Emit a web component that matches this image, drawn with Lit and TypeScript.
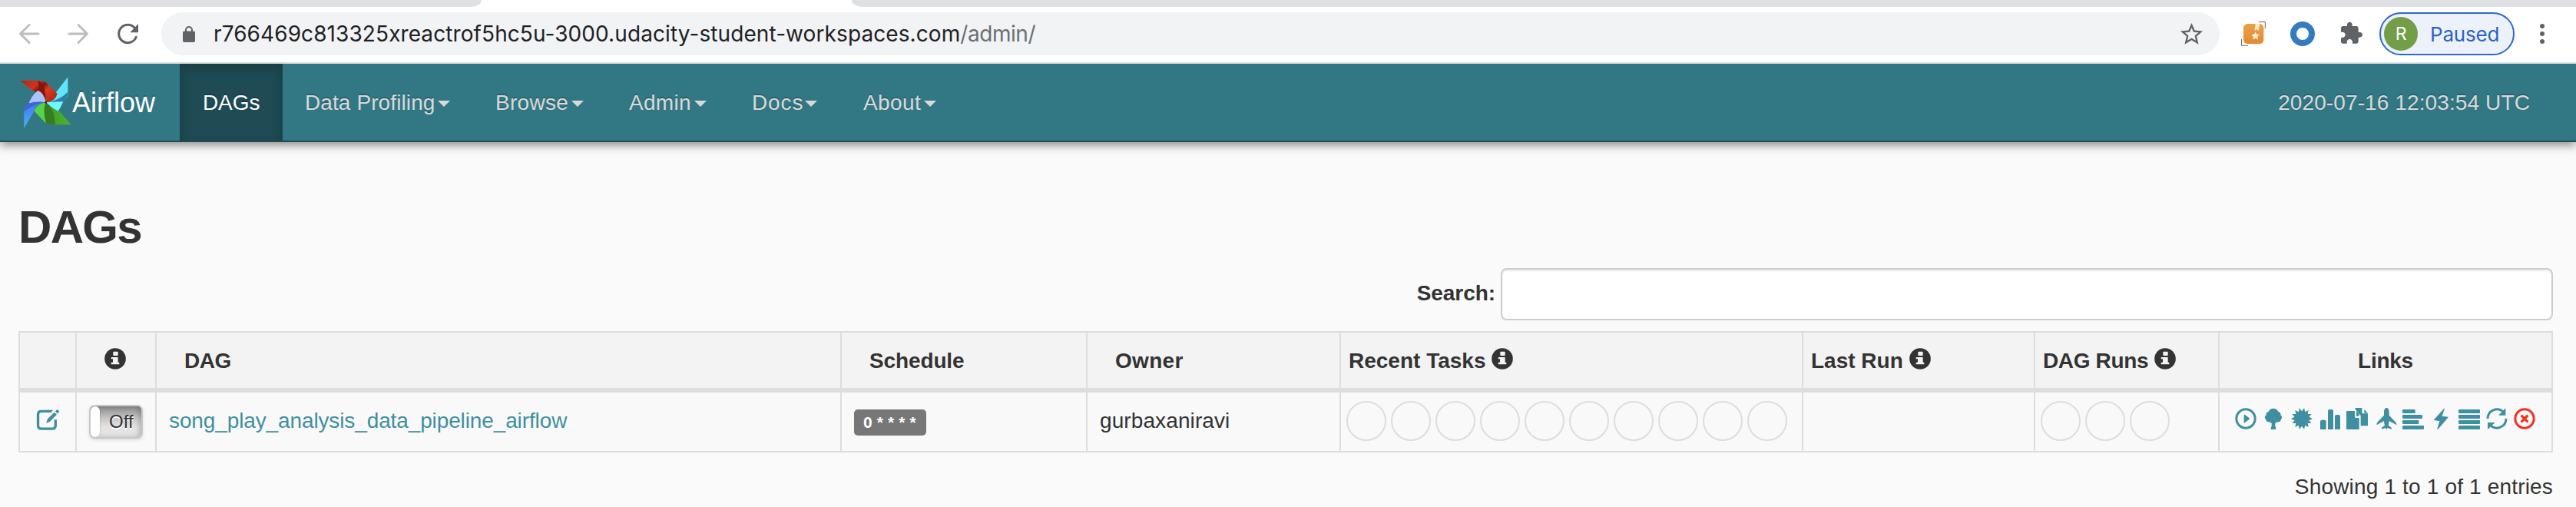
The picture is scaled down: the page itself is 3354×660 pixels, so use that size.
import { LitElement, html, svg, css, TemplateResult } from "lit";
import { customElement } from "lit/decorators.js";

/* Points of a star-shaped burst centred on (cx, cy). */
const burst = (n: number, cx: number, cy: number, outer: number, inner: number, start = 0): string =>
  Array.from({ length: n * 2 }, (_, i) => {
    const r = i % 2 ? inner : outer;
    const a = start + (Math.PI * i) / n;
    return `${(cx + r * Math.cos(a)).toFixed(1)},${(cy + r * Math.sin(a)).toFixed(1)}`;
  }).join(" ");

const infoIcon = html`<svg class="info" viewBox="0 0 84 84">
  <circle cx="42" cy="42" r="41.5" fill="#333" />
  <path fill="#f3f3f3" d="M36 14h15q2 0 2 2v12q0 2-2 2H36q-2 0-2-2V16q0-2 2-2zM28 36h23q2 0 2 2v18h3q2 0 2 2v4q0 2-2 2H28q-2 0-2-2v-4q0-2 2-2h5V43h-5q-2 0-2-2v-3q0-2 2-2z" />
</svg>`;

/* Action icons of a row, each on an 84-unit square. */
const links: { title: string; shape: TemplateResult }[] = [
  { title: "Trigger Dag", shape: svg`<circle cx="42" cy="42" r="36.5" fill="none" stroke="currentColor" stroke-width="9"/><path d="M35 27q0-3 3-1l18 14q3 2 0 4L38 58q-3 2-3-1z"/>` },
  { title: "Tree View", shape: svg`<path d="M42 2c9 0 17 5 19 13 8 1 10 6 9 12 6 5 7 13 2 18-2 9-9 12-17 10-2 3-4 4-6 4v12l3 8q1 5-2 5H34q-3 0-2-5l3-8V59c-3 0-5-1-6-4-8 2-15-2-17-10-5-6-4-13 2-18-1-7 2-11 9-12 2-8 10-13 19-13z"/>` },
  { title: "Graph View", shape: svg`<polygon points=${burst(14, 42, 42, 42, 29)}/>` },
  { title: "Tasks Duration", shape: svg`<path d="M6 84V53q0-6 6-6h11q6 0 6 6v31zM36 84V12q0-6 6-6h9q6 0 6 6v72zM63 84V33q0-6 6-6h9q6 0 6 6v51z"/>` },
  { title: "Task Tries", shape: svg`<path d="M2 12h31v22q0 5 5 5h12v43q0 2-2 2H2q-2 0-2-2V14q0-2 2-2zM39 12l11 11-.5 9H39zM35 0h26v18q0 4 4 4h19v46q0 2-2 2H56V29L35 6zM70 6l14 14H70z"/>` },
  { title: "Landing Times", shape: svg`<path d="M46 0c7 0 10 8 10 17v12l26 27q3 3 3 11L56 51q0 9-3 17l11 8q2 2 1 7L50 78l-4 6-4-6-15 5q-1-5 1-7l11-8q-3-8-3-17L7 67q0-8 3-11l26-27V17C36 8 39 0 46 0z"/>` },
  { title: "Gantt View", shape: svg`<rect y="6" width="50" height="15" rx="3"/><rect y="27" width="78" height="15" rx="3"/><rect y="48" width="64" height="15" rx="3"/><rect y="69" width="84" height="15" rx="3"/>` },
  { title: "Code View", shape: svg`<path d="M57 2 47 32l23 3q2 1 0 3L31 83q-3 3-3-1l9-30-22-4q-1-1 1-3L55 2q2-2 2 0z"/>` },
  { title: "Logs", shape: svg`<rect y="6" width="84" height="15" rx="3"/><rect y="27" width="84" height="15" rx="3"/><rect y="48" width="84" height="15" rx="3"/><rect y="69" width="84" height="15" rx="3"/>` },
  { title: "Refresh", shape: svg`<g fill="none" stroke="currentColor" stroke-width="9"><path d="M6 42A36 36 0 0 1 68 17"/><path d="M78 42A36 36 0 0 1 16 67"/></g><path d="M76 1v28H48zM6 84V57h29z"/>` },
  { title: "Delete Dag", shape: svg`<circle cx="42" cy="42" r="36.5" fill="none" stroke="currentColor" stroke-width="9"/><path fill="none" stroke="currentColor" stroke-width="10" d="m29 29 26 26M55 29 29 55"/>` },
];

const menus = [
  { label: "Data Profiling", cls: "m-data" },
  { label: "Browse", cls: "m-browse" },
  { label: "Admin", cls: "m-admin" },
  { label: "Docs", cls: "m-docs" },
  { label: "About", cls: "m-about" },
];

@customElement("app-root")
export class AppRoot extends LitElement {
  static styles = css`
    :host { display: block; height: 660px; overflow: hidden; background: #fafafa; color: #333;
      font: 28px/40px "Liberation Sans", Arial, sans-serif; }
    * { box-sizing: border-box; }
    svg { display: block; flex: none; overflow: visible; }

    .tabs { display: flex; justify-content: space-between; height: 9px; background: #fff; }
    .tabs div { background: #dee0e4; }
    .tab-l { width: 627px; border-radius: 0 0 14px 0 / 0 0 9px 0; }
    .tab-r { width: 2245px; border-radius: 0 0 0 14px / 0 0 0 9px; }
    .toolbar { display: flex; align-items: center; height: 74px; padding: 0 0 2px 24px; background: #fff;
      border-bottom: 2px solid #dadce0; color: #5f6368; }
    .back { margin-right: 36px; }
    .fwd { margin-right: 36px; }
    .reload { margin-right: 29px; }
    .url { flex: none; display: flex; align-items: center; width: 2680px; height: 56px; padding: 0 19px 0 28px;
      border-radius: 28px; background: #f1f3f4; font-family: Inter, sans-serif; white-space: pre; color: #202124; }
    .lock { margin-right: 24px; }
    .domain { letter-spacing: 0.09px; }
    .path { letter-spacing: -0.45px; color: #6b6f73; }
    .star { margin-left: auto; }
    .ext { margin-left: 28px; }
    .ring { width: 32px; height: 32px; margin-left: 32px; border: 8px solid #347cbe; border-radius: 50%; }
    .puzzle { margin-left: 34px; }
    .profile { display: flex; align-items: center; width: 176px; height: 56px; margin-left: 18px; padding-left: 4px;
      border: 2px solid #2f67cd; border-radius: 28px; background: #edf2fa; color: #2b62c9;
      font: 26px/40px Inter, sans-serif; letter-spacing: -0.2px; }
    .profile span + span { padding-top: 2px; }
    .avatar { width: 44px; height: 44px; margin-right: 16px; border-radius: 50%; background: #739e48; color: #fff;
      font-size: 23px; line-height: 45px; text-align: center; }
    .dots { display: grid; gap: 4px; margin-left: 33px; }
    .dots i { width: 6px; height: 6px; border-radius: 50%; background: #5f6368; }

    nav { display: flex; height: 102px; border-bottom: 2px solid #1f4b55; background: #327884; color: #d9d9d9;
      line-height: 102px; text-shadow: 0 -2px 0 rgba(0, 0, 0, 0.2); box-shadow: 0 4px 12px rgba(0, 0, 0, 0.45);
      clip-path: inset(0 0 -30px 0); white-space: nowrap; }
    .brand { display: flex; width: 234px; padding-left: 26px; color: #fff; font-size: 36px; }
    .logo { margin: 17px 1px 0 0; }
    .active { width: 134px; padding-left: 30px; background: #1e4b54; color: #fff;
      box-shadow: inset 0 6px 16px rgba(0, 0, 0, 0.2); letter-spacing: -0.1px; margin-right: 29px; }
    .menu { display: flex; align-items: center; gap: 4px; flex: none; height: 100px; padding-top: 2px; line-height: 40px; }
    .caret { border: 8px solid transparent; border-top-color: currentColor; border-bottom: 0; margin-top: 2px; }
    .m-data { width: 248px; letter-spacing: 0.1px; gap: 4px; }
    .m-browse { width: 174px; letter-spacing: 0.3px; }
    .m-admin { width: 160px; letter-spacing: 0.3px; }
    .m-docs { width: 145px; letter-spacing: 0.9px; gap: 2px; }
    .m-about { letter-spacing: 0.4px; gap: 4px; }
    .clock { margin: 0 60px 0 auto; letter-spacing: 0.11px; }

    main { padding: 78px 30px 0 24px; }
    h2 { margin: 0; font-size: 60px; line-height: 66px; letter-spacing: -1.7px; }
    .search { display: flex; justify-content: flex-end; gap: 7px; margin: 20px 0 14px; height: 68px; }
    .search label { font-weight: 700; line-height: 66px; letter-spacing: -0.05px; }
    .search input { width: 1370px; height: 68px; margin: 0; border: 2px solid #ccc; border-radius: 8px; background: #fff;
      box-shadow: inset 0 2px 2px rgba(0, 0, 0, 0.075); }
    .table { display: grid; grid-template-columns: 72px 102px 1fr 318px 328px 600px 300px 238px 432px;
      grid-template-rows: 72px 76px; gap: 6px 2px; padding: 2px; background: #ddd; white-space: nowrap; }
    .th { display: flex; align-items: center; padding: 2px 0 0 10px; background: #f3f3f3; font-weight: 700; }
    .th.sort { padding-left: 36px; }
    .th.mid { justify-content: center; padding-left: 0; }
    .td { display: flex; align-items: center; background: #f9f9f9; padding: 0 0 2px 16px; }
    .info { width: 28px; height: 28px; margin: 0 0 6px 8px; }
    .lone { display: flex; padding-right: 10px; }
    .w-dag { letter-spacing: -0.5px; }
    .w-sched { letter-spacing: -0.13px; }
    .w-owner { letter-spacing: 0.3px; }
    .w-runs { letter-spacing: -0.35px; }
    .w-links { letter-spacing: -0.26px; }
    .td.edit { padding: 0 0 6px 22px; color: #3f8fa0; }
    .td.sw { padding: 0 0 0 16px; }
    .switch { display: flex; width: 70px; height: 44px; border: 2px solid #c8c8c8; border-radius: 7px; overflow: hidden;
      background: linear-gradient(#8b8b8b, #c9c9c9 40%, #e2e2e2 65%, #e6e6e6);
      box-shadow: inset -3px 0 6px rgba(0, 0, 0, 0.2), 0 2px 4px rgba(0, 0, 0, 0.12); font-size: 24px; }
    .switch b { width: 12px; border-radius: 6px; background: #fff; box-shadow: 1px 0 1px rgba(0, 0, 0, 0.12); margin-right: 12px; }
    .switch span { line-height: 40px; text-shadow: 0 2px 0 #fff; }
    .dag { color: #3f8fa0; letter-spacing: -0.12px; }
    .owner { letter-spacing: 0.1px; }
    .td.sch { padding: 2px 0 0 16px; }
    .badge { height: 34px; width: 94px; padding-left: 12px; border-radius: 5px; background: #777; color: #fff;
      font: 700 21px/34px "Liberation Sans", Arial, sans-serif; letter-spacing: 0.12px; }
    .rings { display: flex; gap: 6px; }
    .rings i { width: 52px; height: 52px; border: 2px solid #ddd; border-radius: 50%; }
    .td.tasks { padding: 0 0 2px 7px; }
    .td.links { padding: 0 0 8px 20px; gap: 8.33px; color: #3f8fa0; }
    .links svg { width: 28px; height: 28px; fill: currentColor; }
    .links svg:last-child { color: #ee3323; }
    .entries { margin-top: 25px; text-align: right; letter-spacing: 0.17px; }
  `;

  render() {
    return html`
      <div class="tabs"><div class="tab-l"></div><div class="tab-r"></div></div>
      <div class="toolbar">
        <svg class="back" width="28" height="28" viewBox="0 0 28 28" fill="none" stroke="#bbbdbf" stroke-width="3" stroke-linecap="round" stroke-linejoin="round"><path d="M26 14H3M14 2.5 2.5 14 14 25.5"/></svg>
        <svg class="fwd" width="28" height="28" viewBox="0 0 28 28" fill="none" stroke="#bbbdbf" stroke-width="3" stroke-linecap="round" stroke-linejoin="round"><path d="M2 14h23M14 2.5 25.5 14 14 25.5"/></svg>
        <svg class="reload" width="29" height="28" viewBox="0 0 29 28"><path d="M25.3 18.3A11.7 11.7 0 1 1 23 6" fill="none" stroke="#5f6368" stroke-width="3" stroke-linecap="round"/><path d="M28 1v11.3H17.3z" fill="#5f6368"/></svg>
        <div class="url">
          <svg class="lock" width="16" height="21" viewBox="0 0 16 21"><rect y="6.5" width="16" height="14.5" rx="2" fill="#5f6368"/><path d="M4 8V5a4 4 0 0 1 8 0v3" fill="none" stroke="#5f6368" stroke-width="2"/></svg>
          <span class="domain">r766469c813325xreactrof5hc5u-3000.udacity-student-workspaces.com</span><span class="path">/admin/</span>
          <svg class="star" width="35" height="35" viewBox="0 0 24 24" fill="#5f6368"><path d="M22 9.24l-7.19-.62L12 2 9.19 8.63 2 9.24l5.46 4.73L5.82 21 12 17.27 18.18 21l-1.63-7.03L22 9.24zM12 15.4l-3.76 2.27 1-4.28-3.32-2.88 4.38-.38L12 6.1l1.71 4.04 4.38.38-3.32 2.88 1 4.28L12 15.4z"/></svg>
        </div>
        <svg class="ext" width="32" height="32" viewBox="0 0 96 96">
          <defs><linearGradient id="amber" x1="0" y1="0" x2="0" y2="1"><stop offset="0" stop-color="#eaa144"/><stop offset="1" stop-color="#e68834"/></linearGradient></defs>
          <rect x="9" y="9" width="79" height="78" rx="16" fill="url(#amber)"/>
          <path d="M56 9h17l-5 28-7-6-9 4z" fill="#fbe9c8"/>
          <polygon points=${burst(5, 56, 57, 17, 8, -Math.PI / 2)} fill="#fdf3dc"/>
          <path d="M68 1.5h26v26M1.5 68v26h26" fill="none" stroke="#6b6b6b" stroke-width="3"/>
        </svg>
        <div class="ring"></div>
        <svg class="puzzle" width="32" height="32" viewBox="2 0.5 24 24" fill="#5f6368"><path d="M20.5 11H19V7c0-1.1-.9-2-2-2h-4V3.5C13 2.12 11.88 1 10.5 1S8 2.12 8 3.5V5H4c-1.1 0-1.99.9-1.99 2v3.8H3.5c1.49 0 2.7 1.21 2.7 2.7s-1.21 2.7-2.7 2.7H2V20c0 1.1.9 2 2 2h3.8v-1.5c0-1.49 1.21-2.7 2.7-2.7 1.49 0 2.7 1.21 2.7 2.7V22H17c1.1 0 2-.9 2-2v-4h1.5c1.38 0 2.5-1.12 2.5-2.5S21.88 11 20.5 11z"/></svg>
        <div class="profile"><span class="avatar">R</span><span>Paused</span></div>
        <div class="dots"><i></i><i></i><i></i></div>
      </div>

      <nav>
        <div class="brand">
          <svg class="logo" width="67" height="67" viewBox="77 61 201 201">
            <defs>
              <linearGradient id="red" x1="0" x2="1" y1="0" y2="0.6"><stop offset="0" stop-color="#b5230f"/><stop offset="0.4" stop-color="#d5321c"/><stop offset="0.55" stop-color="#7a1508"/><stop offset="0.7" stop-color="#dd3a22"/><stop offset="1" stop-color="#b92a14"/></linearGradient>
              <linearGradient id="blue" x1="0" x2="0" y1="0" y2="1"><stop offset="0" stop-color="#3b78ea"/><stop offset="1" stop-color="#4fb0ff"/></linearGradient>
              <linearGradient id="green" x1="0" x2="1" y1="0" y2="0"><stop offset="0" stop-color="#3b8a25"/><stop offset="1" stop-color="#4cb52e"/></linearGradient>
            </defs>
            <path d="M264 62v68q0 15-16 22l-31 15-39-6 42-42z" fill="#62e4fb"/>
            <path d="M263 121q2 24-17 36-28 12-68 4 52-6 85-40z" fill="#2c7fa8"/>
            <path d="M178 161q38-3 68-3-10 26-30 51-24-11-38-48z" fill="#72f6ff"/>
            <path d="M78 76h72q20 0 34 12l39 39-5 12q-10 19-40 22 0-25-22-32-24-10-38-21z" fill="url(#red)"/>
            <path d="M147 76q31 8 31 85-1-22-22-32-3-30-9-53z" fill="#831607"/>
            <path d="M147 114q25 10 31 47-30-5-66 3 9-28 35-50z" fill="#a8c4fb"/>
            <path d="M178 161q-29 2-44 31l-41 69v-68q2-28 30-31 28-6 55-1z" fill="url(#blue)"/>
            <path d="M93 197q1-31 30-35 28-5 55-1-40 1-85 36z" fill="#3d64db"/>
            <path d="M178 161q32 30 55 36l43 51h-73q-20-1-32-13l-39-41q10-28 46-33z" fill="url(#green)"/>
            <path d="M178 161q-10 18-5 42l7 38q-6-2-9-6l-39-41q12-27 46-33z" fill="#59d24b"/>
            <path d="M178 161q34 20 36 87l-11 0q-14 0-24-7-14-45-1-80z" fill="#337d22"/>
            <circle cx="178" cy="161" r="4" fill="#222"/>
          </svg>
          <span>Airflow</span>
        </div>
        <div class="active">DAGs</div>
        ${menus.map((m) => html`<div class="menu ${m.cls}">${m.label}<i class="caret"></i></div>`)}
        <div class="clock">2020-07-16 12:03:54 UTC</div>
      </nav>

      <main>
        <h2>DAGs</h2>
        <div class="search"><label for="q">Search:</label><input id="q" type="text" /></div>
        <div class="table">
          <div class="th"></div>
          <div class="th mid"><span class="lone">${infoIcon}</span></div>
          <div class="th sort w-dag">DAG</div>
          <div class="th sort w-sched">Schedule</div>
          <div class="th sort w-owner">Owner</div>
          <div class="th">Recent Tasks${infoIcon}</div>
          <div class="th">Last Run${infoIcon}</div>
          <div class="th w-runs">DAG Runs${infoIcon}</div>
          <div class="th mid w-links">Links</div>

          <div class="td edit">
            <svg width="29" height="27" viewBox="84 307 86 80" fill="none" stroke="currentColor"><path d="M141 314H101q-12.5 0-12.5 12.5v42q0 13 12.5 13h42q13 0 13-13V346" stroke-width="10"/><path d="M120 360l5-16 26-26 10 9-26 26zM155 314l7-6q2-1 4 1l4 4q1 2 0 3l-7 7z" fill="currentColor" stroke="none"/><path d="M138 309l10 0-12 10z" fill="currentColor" stroke="none"/></svg>
          </div>
          <div class="td sw"><div class="switch"><b></b><span>Off</span></div></div>
          <div class="td dag">song_play_analysis_data_pipeline_airflow</div>
          <div class="td sch"><span class="badge">0 * * * *</span></div>
          <div class="td owner">gurbaxaniravi</div>
          <div class="td tasks"><div class="rings">${Array.from({ length: 10 }, () => html`<i></i>`)}</div></div>
          <div class="td"></div>
          <div class="td tasks"><div class="rings">${[0, 1, 2].map(() => html`<i></i>`)}</div></div>
          <div class="td links">${links.map((l) => html`<svg viewBox="0 0 84 84" aria-label=${l.title}>${l.shape}</svg>`)}</div>
        </div>
        <div class="entries">Showing 1 to 1 of 1 entries</div>
      </main>
    `;
  }
}
